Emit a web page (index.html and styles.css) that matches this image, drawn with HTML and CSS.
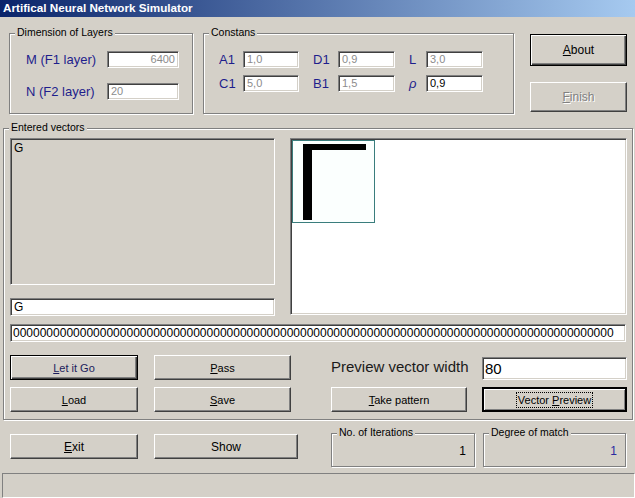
FILE: index.html
```html
<!DOCTYPE html>
<html>
<head>
<meta charset="utf-8">
<title>Artifical Neural Network Simulator</title>
<link rel="stylesheet" href="styles.css">
</head>
<body>
<div class="window">
  <div class="titlebar">Artifical Neural Network Simulator</div>

  <div class="top">
    <div class="group g-dim">
      <span class="group-label">Dimension of Layers</span>
      <div class="dim-grid">
        <span class="lbl">M (F1 layer)</span>
        <div class="edit disabled right">6400</div>
        <span class="lbl">N (F2 layer)</span>
        <div class="edit disabled">20</div>
      </div>
    </div>

    <div class="group g-const">
      <span class="group-label">Constans</span>
      <div class="const-grid">
        <div class="pair"><span class="lbl w24">A1</span><div class="edit disabled grow">1,0</div></div>
        <div class="pair"><span class="lbl w25">D1</span><div class="edit disabled grow">0,9</div></div>
        <div class="pair"><span class="lbl w17">L</span><div class="edit disabled grow">3,0</div></div>
        <div class="pair"><span class="lbl w24">C1</span><div class="edit disabled grow">5,0</div></div>
        <div class="pair"><span class="lbl w25">B1</span><div class="edit disabled grow">1,5</div></div>
        <div class="pair"><span class="lbl w17 rho">ρ</span><div class="edit grow">0,9</div></div>
      </div>
    </div>

    <div class="side-buttons">
      <div class="btn default about"><span><u>A</u>bout</span></div>
      <div class="btn disabled finish"><span><u>F</u>inish</span></div>
    </div>
  </div>

  <div class="group g-vectors">
    <span class="group-label">Entered vectors</span>
    <div class="vec-top">
      <div class="listcol">
        <div class="listbox">G</div>
        <div class="edit name">G</div>
      </div>
      <div class="preview">
        <div class="pattern">
          <svg width="82" height="82" viewBox="0 0 82 82">
            <rect x="10" y="3" width="9" height="76" fill="#000"/>
            <rect x="10" y="3" width="63" height="6" fill="#000"/>
          </svg>
        </div>
      </div>
    </div>
    <div class="edit zeros">000000000000000000000000000000000000000000000000000000000000000000000000000000000000000000</div>
    <div class="controls">
      <div class="btn default letgo w128"><span><u>L</u>et it Go</span></div>
      <div class="btn w137"><span><u>P</u>ass</span></div>
      <span class="pv-label">Preview vector width</span>
      <div class="edit pv-input">80</div>
      <div class="btn w128"><span><u>L</u>oad</span></div>
      <div class="btn w137"><span><u>S</u>ave</span></div>
      <div class="btn w136"><span><u>T</u>ake pattern</span></div>
      <div class="btn focus w145"><span>Vector <u>P</u>review</span></div>
    </div>
  </div>

  <div class="bottom">
    <div class="btn exit"><span><u>E</u>xit</span></div>
    <div class="btn show"><span>Show</span></div>
    <div class="group g-iter">
      <span class="group-label">No. of Iterations</span>
      <div class="group-value">1</div>
    </div>
    <div class="group g-match">
      <span class="group-label">Degree of match</span>
      <div class="group-value blue">1</div>
    </div>
  </div>

  <div class="statusbar"></div>
</div>
</body>
</html>
```

FILE: styles.css
```css
* { box-sizing: border-box; }

body {
  margin: 0;
  background: #D4D0C8;
  font-family: "Liberation Sans", Arial, sans-serif;
}

.window {
  width: 635px;
  height: 498px;
  overflow: hidden;
  background: #D4D0C8;
}

.titlebar {
  height: 17px;
  background: linear-gradient(to right, #0A246A, #A6CAF0);
  color: #fff;
  font-weight: bold;
  font-size: 11.7px;
  line-height: 16px;
  padding-left: 3px;
  white-space: nowrap;
}

/* group boxes */
.group {
  position: relative;
  border: 1px solid #808080;
  box-shadow: inset 1px 1px 0 #fff, 1px 1px 0 #fff;
}

.group-label {
  position: absolute;
  top: -8px;
  left: 5px;
  padding: 0 2px;
  background: #D4D0C8;
  font-size: 10.5px;
  line-height: 12px;
  color: #000;
  white-space: nowrap;
}

/* top row */
.top {
  display: flex;
  align-items: flex-start;
  padding: 16px 0 0 9px;
}

.g-dim {
  width: 184px;
  height: 81px;
  padding: 17px 0 0 16px;
}

.dim-grid {
  display: grid;
  grid-template-columns: 81px 72px;
  row-gap: 15px;
  align-items: center;
}

.lbl {
  font-size: 13px;
  line-height: 15px;
  color: #1e1e8c;
  white-space: nowrap;
}

.lbl.rho { font-style: italic; }

.w24 { width: 24px; flex: none; }
.w25 { width: 25px; flex: none; }
.w17 { width: 17px; flex: none; }

.g-const {
  width: 311px;
  height: 81px;
  margin-left: 10px;
  padding: 17px 0 0 15px;
}

.const-grid {
  display: grid;
  grid-template-columns: 80px 82px 74px;
  column-gap: 14px;
  row-gap: 7px;
}

.pair {
  display: flex;
  align-items: center;
}

.grow { flex: 1; }

/* sunken edit */
.edit {
  height: 17px;
  background: #fff;
  border: 1px solid;
  border-color: #808080 #fff #fff #808080;
  box-shadow: inset 1px 1px 0 #404040, inset -1px -1px 0 #D4D0C8;
  font-size: 11px;
  line-height: 15px;
  padding: 0 3px;
  color: #000;
  overflow: hidden;
  white-space: nowrap;
}

.edit.disabled { color: #8c8c8c; }
.edit.right { text-align: right; padding-right: 3px; }

/* buttons */
.side-buttons {
  margin-left: 16px;
  width: 97px;
  display: flex;
  flex-direction: column;
}

.btn {
  display: flex;
  align-items: center;
  justify-content: center;
  height: 25px;
  background: #D4D0C8;
  border: 1px solid;
  border-color: #fff #404040 #404040 #fff;
  box-shadow: inset -1px -1px 0 #808080;
  font-size: 11px;
  color: #000;
  white-space: nowrap;
}

.btn.default {
  border: 1px solid #000;
  box-shadow: inset 1px 1px 0 #fff, inset -1px -1px 0 #404040, inset -2px -2px 0 #808080;
}

.btn.focus {
  border: 2px solid #000;
  box-shadow: inset 1px 1px 0 #fff, inset -1px -1px 0 #808080;
}

.btn.focus span {
  outline: 1px dotted #000;
  outline-offset: 1px;
}

.btn.disabled {
  color: #808080;
  text-shadow: 1px 1px 0 #fff;
}

.about {
  margin-top: 1px;
  height: 32px;
  font-size: 12px;
}

.finish {
  margin-top: 16px;
  height: 30px;
  font-size: 12px;
}

.letgo { color: #1c1c5c; }

.w128 { width: 128px; }
.w136 { width: 136px; }
.w137 { width: 137px; }
.w145 { width: 145px; }

/* entered vectors */
.g-vectors {
  margin: 14px 0 0 3px;
  width: 630px;
  padding: 9px 0 7px 6px;
}

.vec-top {
  display: flex;
  gap: 15px;
}

.listcol {
  width: 265px;
  display: flex;
  flex-direction: column;
}

.listbox {
  height: 147px;
  background: #D4D0C8;
  border: 1px solid;
  border-color: #808080 #fff #fff #808080;
  box-shadow: inset 1px 1px 0 #404040, inset -1px -1px 0 #D4D0C8;
  font-size: 12px;
  line-height: 14px;
  padding: 2px 3px;
}

.edit.name {
  margin-top: 13px;
  height: 18px;
  font-size: 12px;
  line-height: 16px;
}

.preview {
  width: 337px;
  height: 177px;
  background: #fff;
  border: 1px solid;
  border-color: #808080 #fff #fff #808080;
  box-shadow: inset 1px 1px 0 #404040, inset -1px -1px 0 #D4D0C8;
  padding: 1px;
}

.pattern {
  width: 83px;
  height: 83px;
  border: 1px solid #3a7d7d;
  background: #fbfffe;
}

.pattern svg { display: block; }

.edit.zeros {
  margin-top: 8px;
  width: 616px;
  height: 18px;
  font-size: 12px;
  line-height: 16px;
  padding: 0 2px;
}

.controls {
  margin-top: 13px;
  display: grid;
  grid-template-columns: 144px 177px 151px 145px;
  grid-template-rows: 25px 25px;
  row-gap: 7px;
  align-items: center;
}

.pv-label {
  font-size: 15px;
  line-height: 17px;
  color: #1a1a1a;
  white-space: nowrap;
  margin-top: -3px;
}

.edit.pv-input {
  width: 145px;
  height: 23px;
  font-size: 15px;
  line-height: 21px;
  padding: 0 2px;
  margin-top: 1px;
}

/* bottom row */
.bottom {
  display: flex;
  align-items: flex-start;
  margin-top: 13px;
  padding-left: 10px;
}

.exit {
  margin-top: 1px;
  width: 128px;
  font-size: 12px;
}

.show {
  margin-top: 1px;
  margin-left: 16px;
  width: 144px;
  font-size: 12px;
}

.g-iter {
  margin-left: 33px;
  width: 144px;
  height: 34px;
}

.g-match {
  margin-left: 8px;
  width: 143px;
  height: 34px;
}

.group-value {
  text-align: right;
  padding: 10px 8px 0 0;
  font-size: 12px;
  line-height: 14px;
  color: #000;
}

.group-value.blue { color: #2a2aa0; }

.statusbar {
  margin: 6px 0 0 2px;
  width: 633px;
  height: 25px;
  border: 1px solid;
  border-color: #808080 #fff #fff #808080;
}
```
